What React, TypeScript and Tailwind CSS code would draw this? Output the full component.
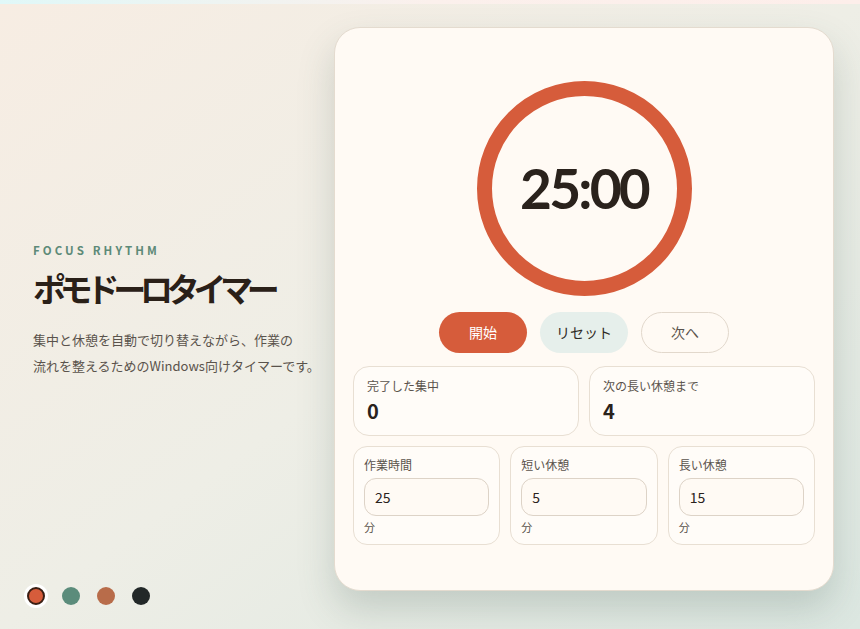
import { useState } from 'react';

const jp = { fontFamily: '"Noto Sans CJK JP", "Noto Sans", sans-serif' };

const swatches = ['#d65c3b', '#5b8c7b', '#b86c4a', '#222828'];

export default function App() {
  const [work, setWork] = useState('25');
  const [short, setShort] = useState('5');
  const [long, setLong] = useState('15');
  const [active, setActive] = useState(0);

  const settings = [
    { label: '作業時間', value: work, set: setWork },
    { label: '短い休憩', value: short, set: setShort },
    { label: '長い休憩', value: long, set: setLong },
  ];

  return (
    <div className="flex h-[629px] w-full flex-col overflow-hidden" style={jp}>
      <div className="h-[4px] w-full bg-gradient-to-r from-[#e0f8f8] via-[#fbf0ec] to-[#fdeeea]" />
      <main className="flex flex-1 bg-gradient-to-br from-[#f7ede3] via-[#eeeee6] to-[#dce7e1]">
        <section className="flex flex-1 flex-col">
          <div className="flex flex-1 flex-col justify-center pl-[33px] pt-[30px]">
            <p className="text-[11.5px] font-bold uppercase tracking-[0.27em] text-[#5d8a78]">
              Focus Rhythm
            </p>
            <h1 className="mt-[6px] text-[33px] font-bold leading-[46px] tracking-[-0.19em] text-[#2a2018]">
              ポモドーロタイマー
            </h1>
            <p className="mt-[16px] text-[13px] leading-[26px] text-[#5a534c]">
              集中と休憩を自動で切り替えながら、作業の
              <br />
              流れを整えるためのWindows向けタイマーです。
            </p>
          </div>
          <div className="flex items-center gap-[17px] pb-[24px] pl-[27px]">
            {swatches.map((c, i) => (
              <button
                key={c}
                onClick={() => setActive(i)}
                className={
                  i === active
                    ? 'h-[18px] w-[18px] rounded-full border-2 border-[#3a1f14] ring-[3px] ring-white'
                    : 'h-[18px] w-[18px] rounded-full'
                }
                style={{ backgroundColor: c }}
              />
            ))}
          </div>
        </section>

        <div className="pr-[26px] pt-[23px]">
          <div className="flex h-[564px] w-[500px] flex-col rounded-[26px] border border-[#e4dbcf] bg-[#fffaf4] px-[18px] pt-[53px] shadow-[0_18px_36px_rgba(70,95,85,0.22)]">
            <div className="flex justify-center">
              <div className="flex h-[215px] w-[215px] items-center justify-center rounded-full border-[15px] border-[#d65c3b]">
                <span
                  className="text-[55px] font-bold tracking-[-0.05em] text-[#2a221c]"
                  style={{ fontFamily: 'Lato, "Noto Sans", sans-serif' }}
                >
                  25:00
                </span>
              </div>
            </div>

            <div className="mt-[16px] flex justify-center gap-[13px]">
              <button className="h-[41px] w-[88px] rounded-full bg-[#d65c3b] text-[14px] text-white">
                開始
              </button>
              <button className="h-[41px] w-[88px] rounded-full bg-[#e6efeb] text-[14px] text-[#2f2a25]">
                リセット
              </button>
              <button className="h-[41px] w-[88px] rounded-full border border-[#e2d8cc] text-[14px] text-[#5a534c]">
                次へ
              </button>
            </div>

            <div className="mt-[13px] grid grid-cols-2 gap-[10px]">
              <div className="h-[70px] rounded-[16px] border border-[#e8dfd3] bg-[#fffcf8] px-[13px] pt-[10px]">
                <p className="text-[12px] leading-[18px] text-[#5a534c]">完了した集中</p>
                <p className="mt-[3px] text-[20px] font-bold leading-[26px] text-[#2a221c]">0</p>
              </div>
              <div className="h-[70px] rounded-[16px] border border-[#e8dfd3] bg-[#fffcf8] px-[13px] pt-[10px]">
                <p className="text-[12px] leading-[18px] text-[#5a534c]">次の長い休憩まで</p>
                <p className="mt-[3px] text-[20px] font-bold leading-[26px] text-[#2a221c]">4</p>
              </div>
            </div>

            <div className="mt-[10px] grid grid-cols-3 gap-[10px]">
              {settings.map((s) => (
                <div
                  key={s.label}
                  className="h-[99px] rounded-[14px] border border-[#e8dfd3] bg-[#fffcf8] px-[10px] pt-[9px]"
                >
                  <p className="text-[12px] leading-[18px] text-[#5a534c]">{s.label}</p>
                  <input
                    value={s.value}
                    onChange={(e) => s.set(e.target.value)}
                    className="mt-[4px] h-[38px] w-full rounded-[12px] border border-[#ddd3c7] bg-[#fffaf4] px-[10px] text-[14px] text-[#2a221c] outline-none"
                    style={jp}
                  />
                  <p className="mt-[3px] text-[11px] leading-[16px] text-[#5a534c]">分</p>
                </div>
              ))}
            </div>
          </div>
        </div>
      </main>
    </div>
  );
}
